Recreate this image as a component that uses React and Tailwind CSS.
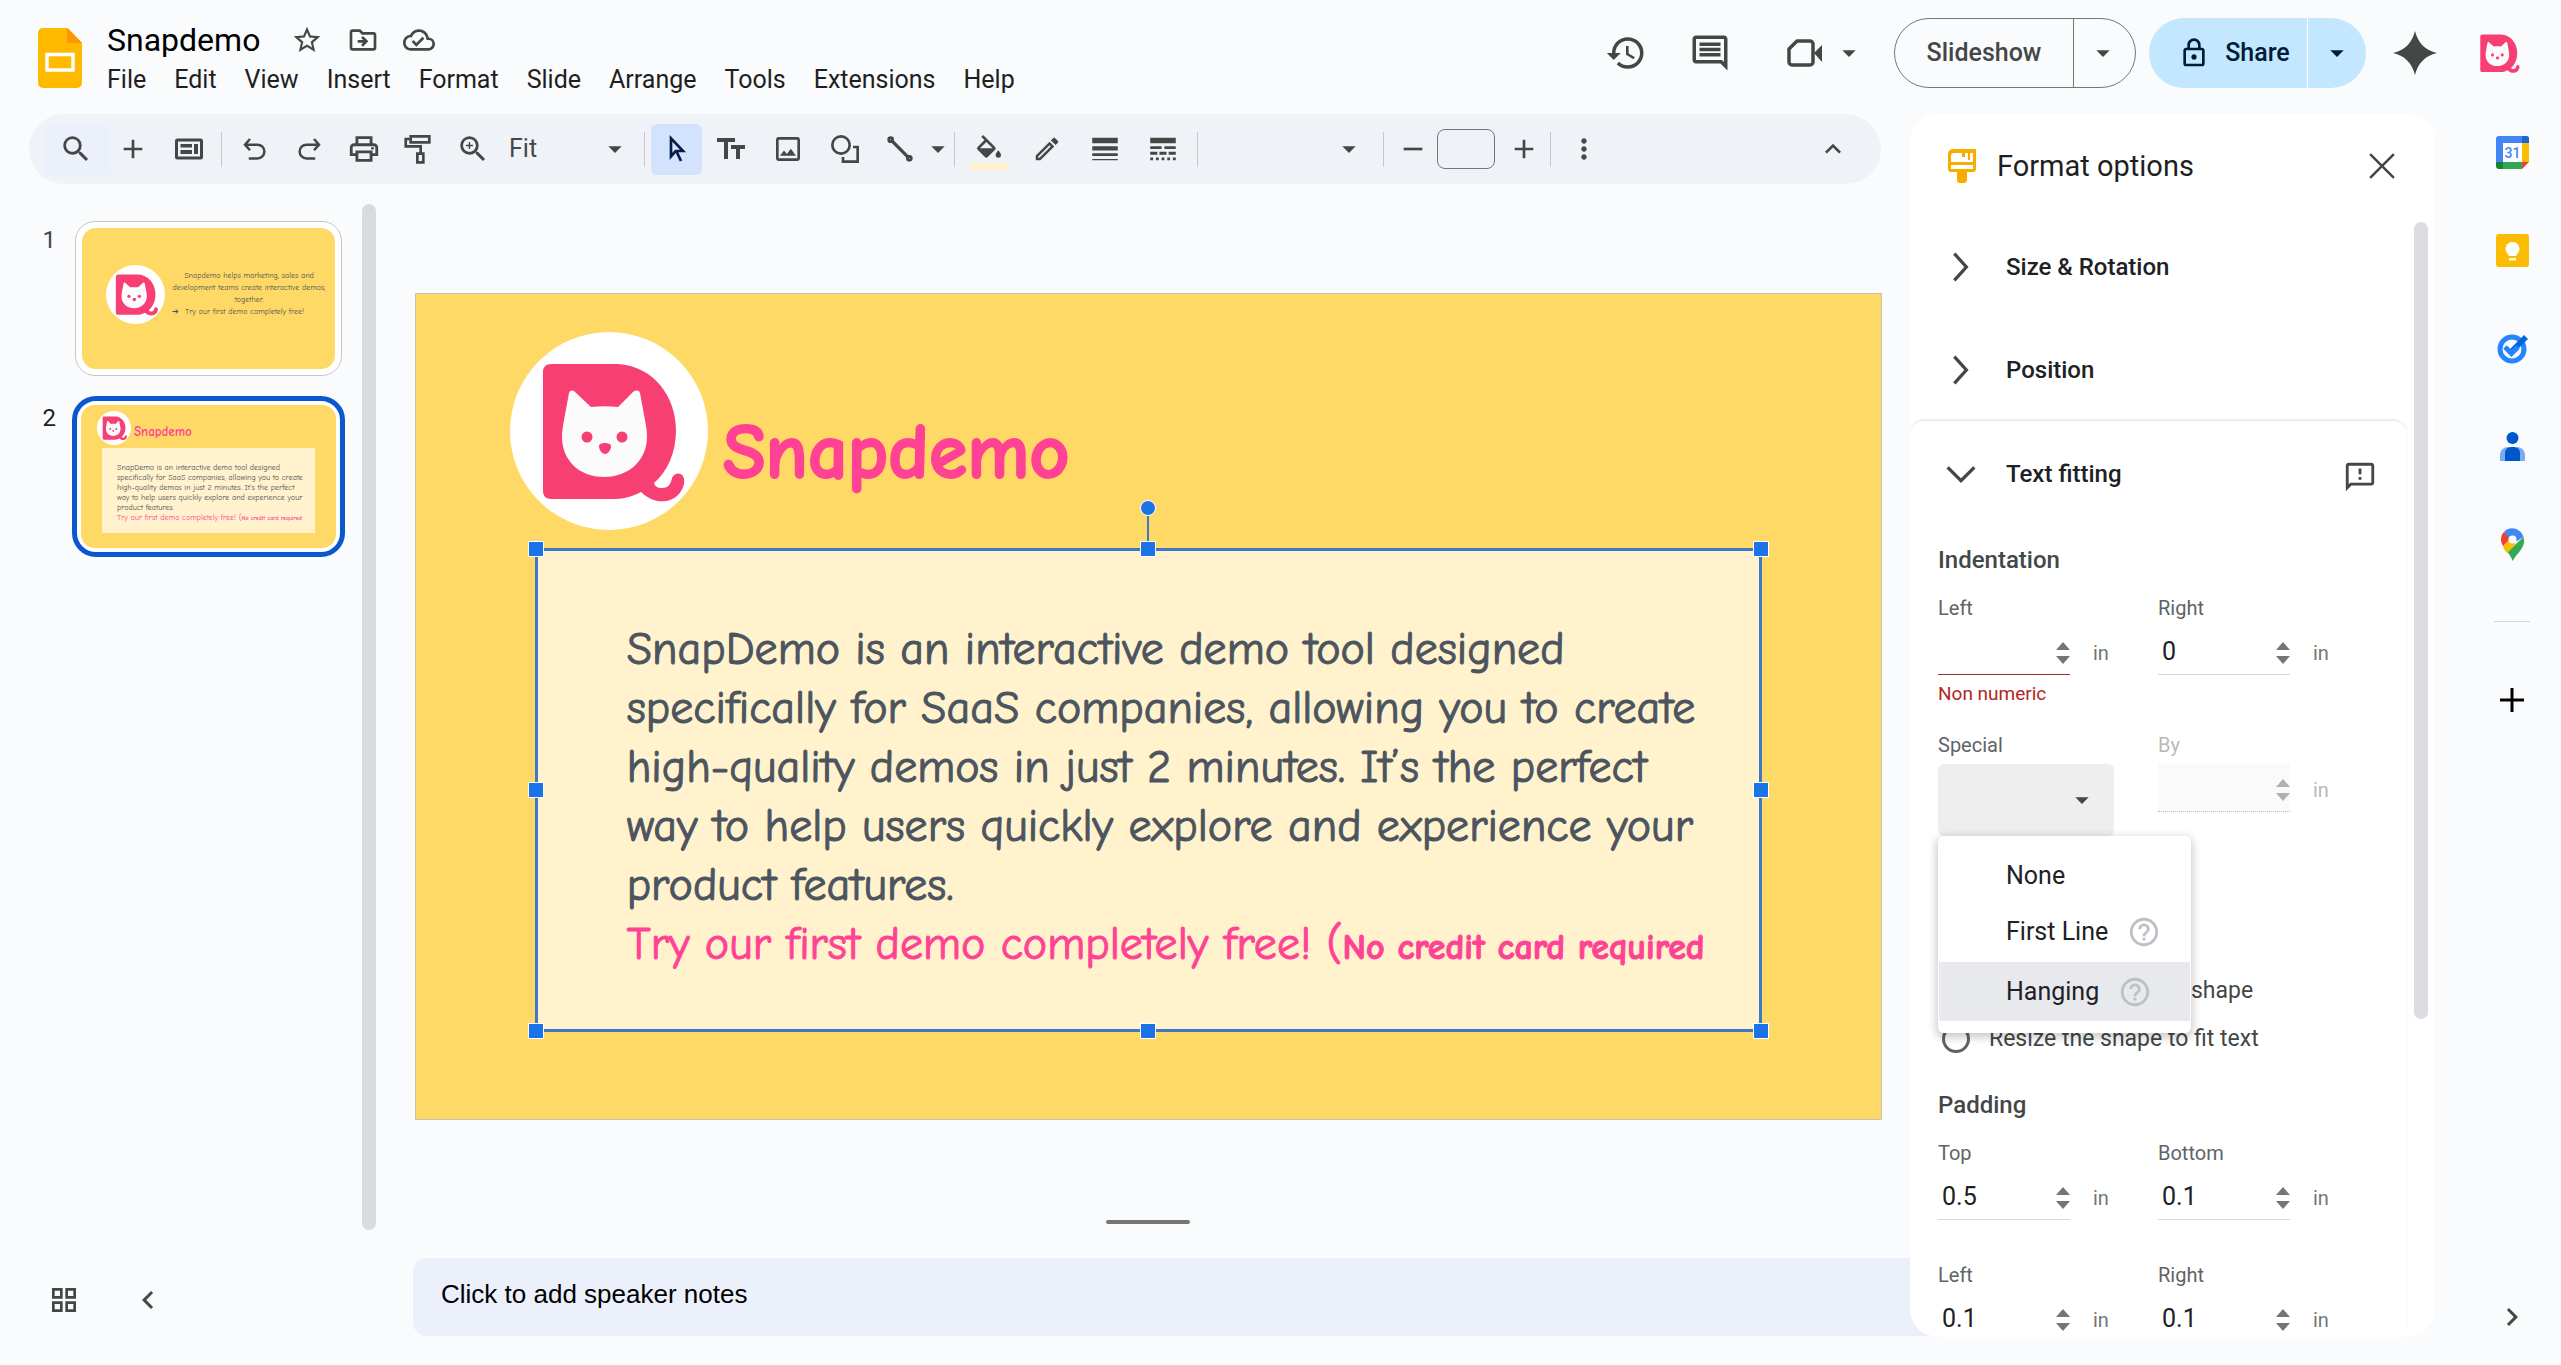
import cn from "clsx";
import {
  MdAdd, MdArrowDropDown, MdChevronLeft, MdChevronRight, MdExpandLess,
  MdHelpOutline, MdHistory, MdLineStyle, MdLineWeight, MdMoreVert,
  MdOutlineCloudDone, MdOutlineComment, MdOutlineDriveFileMove, MdOutlineEdit,
  MdOutlineFeedback, MdOutlineGridView, MdOutlineImage, MdOutlineLock, MdOutlinePrint,
  MdRemove, MdSearch, MdStarBorder, MdZoomIn,
} from "react-icons/md";

const menus = ["File", "Edit", "View", "Insert", "Format", "Slide", "Arrange", "Tools", "Extensions", "Help"];

function CatLogo({ className, viewBox = "0 0 198 198", disc = true }) {
  return (
    <svg className={className} viewBox={viewBox} aria-hidden="true">
      {disc && <circle cx="99" cy="99" r="99" fill="#fff" />}
      <path
        fill="#f83f74"
        d="M41 32h67c35 2 58 32 58 66 0 22-8 41-22 53 1 4 4 5 8 5 7 0 9-5 10-10 2-5 8-6 11-2 3 6 0 13-4 18-10 11-27 9-38-2-8 4-16 7-26 7H41c-5 0-8-3-8-8V40c0-5 3-8 8-8z"
      />
      <path
        fill="#fcfbfc"
        d="M59 61c1-3 4-3 6-1l16 15c9-1 18-1 27 0l15-15c3-2 6-2 7 1l5 27c1 6 2 11 2 17 0 23-18 40-43 40S52 128 52 105c0-6 1-11 2-17z"
      />
      <circle cx="77" cy="105" r="5.5" fill="#f83f74" />
      <circle cx="112" cy="105" r="5.5" fill="#f83f74" />
      <path fill="#f83f74" d="M89 114c0-4 12-4 12 0s-3 8-6 8-6-4-6-8z" />
    </svg>
  );
}

function StrokeIcon({ className, children }) {
  return (
    <svg className={className} viewBox="0 0 24 24" fill="none" stroke="currentColor" strokeWidth="2" aria-hidden="true">
      {children}
    </svg>
  );
}

function ToolButton({ label, className = "w-[55px]", children }) {
  return (
    <button type="button" aria-label={label} className={cn("flex h-[51px] shrink-0 items-center justify-center", className)}>
      {children}
    </button>
  );
}

function Divider() {
  return <div className="mx-[5px] h-[35px] w-px shrink-0 bg-[#c7c7c7]" />;
}

function Header() {
  return (
    <header className="flex h-[114px] shrink-0 items-start justify-between">
      <div className="flex pl-[38px]">
        <svg className="mt-7 h-[60px] w-11" viewBox="0 0 44 60" aria-hidden="true">
          <path fill="#ffba00" d="M5 0h25l14 15v40a5 5 0 0 1-5 5H5a5 5 0 0 1-5-5V5a5 5 0 0 1 5-5z" />
          <path fill="#ff9500" d="M29 0l15 15H29z" />
          <path fill="none" stroke="#fff" strokeWidth="3.5" d="M9 26.500h26v15.500H9z" />
        </svg>
        <div className="flex flex-col pl-[25px] pt-5">
          <div className="flex h-10 items-center text-[#444746]">
            <h1 className="mr-[31px] text-[32px] leading-10 text-black">Snapdemo</h1>
            <button type="button" aria-label="Star" className="mr-6"><MdStarBorder className="size-8" /></button>
            <button type="button" aria-label="Move" className="mr-6"><MdOutlineDriveFileMove className="size-8" /></button>
            <button type="button" aria-label="Saved to Drive"><MdOutlineCloudDone className="size-8" /></button>
          </div>
          <nav className="mt-1 flex gap-7 text-[25px] leading-8 text-[#1f1f1f]">
            {menus.map(menu => <button type="button" key={menu}>{menu}</button>)}
          </nav>
        </div>
      </div>

      <div className="flex h-[70px] items-center pr-[41px] pt-[36px] text-[#444746]">
        <button type="button" aria-label="Version history" className="mr-[42px]"><MdHistory className="size-[42px]" /></button>
        <button type="button" aria-label="Comments" className="mr-[54px]"><MdOutlineComment className="size-[42px]" /></button>
        <button type="button" aria-label="Join a call" className="mr-[29px] flex items-center">
          <svg className="mr-2.5 h-9 w-[38px]" viewBox="0 0 38 36" fill="none" aria-hidden="true">
            <path stroke="currentColor" strokeWidth="3.5" strokeLinejoin="round" d="M12 6h13a3 3 0 0 1 3 3v18a3 3 0 0 1-3 3H7a3 3 0 0 1-3-3V14z" />
            <path fill="currentColor" d="M29 18l8-8v17z" />
          </svg>
          <MdArrowDropDown className="size-8" />
        </button>
        <div className="mr-[13px] flex h-[70px] rounded-full border border-[#747775] text-[25px] font-medium">
          <button type="button" className="w-[178px]">Slideshow</button>
          <button type="button" aria-label="Slideshow options" className="flex w-[62px] items-center justify-center border-l border-[#747775] pr-1">
            <MdArrowDropDown className="size-8" />
          </button>
        </div>
        <div className="mr-[26px] flex h-[70px] overflow-hidden rounded-full bg-[#c2e7ff] text-[25px] font-medium text-[#001d35]">
          <button type="button" className="flex w-[158px] items-center justify-center gap-[15px] pl-3">
            <MdOutlineLock className="size-8" />
            Share
          </button>
          <button type="button" aria-label="Share options" className="flex w-[59px] items-center justify-center border-l border-white">
            <MdArrowDropDown className="size-8" />
          </button>
        </div>
        <button type="button" aria-label="Ask Gemini" className="mr-[42px]">
          <svg className="size-[46px]" viewBox="0 0 46 46" aria-hidden="true">
            <path fill="currentColor" d="M23 1c3 12 10 19 22 22-12 3-19 10-22 22-3-12-10-19-22-22C13 20 20 13 23 1z" />
          </svg>
        </button>
        <button type="button" aria-label="Account"><CatLogo className="h-[39px] w-10" viewBox="32 31 144 138" disc={false} /></button>
      </div>
    </header>
  );
}

function Toolbar() {
  return (
    <div className="ml-[29px] mr-[29px] flex h-[70px] shrink-0 items-center rounded-full bg-[#eff3f8] pl-4 pr-5 text-[#444746]">
      <ToolButton label="Search the menus" className="w-[65px] bg-[#ebf0fa] pr-1"><MdSearch className="size-[34px]" /></ToolButton>
      <ToolButton label="New slide" className="w-[45px]"><MdAdd className="size-8" /></ToolButton>
      <ToolButton label="Layout" className="ml-[7px] w-[54px]">
        <svg className="h-[26px] w-8" viewBox="0 0 32 26" aria-hidden="true">
          <rect x="3.5" y="4" width="25" height="18" rx="1" fill="none" stroke="currentColor" strokeWidth="3" />
          <path fill="currentColor" d="M7.500 8H19v3.500H7.500zM7.500 14H19v4H7.500zM21 8h4v10h-4z" />
        </svg>
      </ToolButton>
      <Divider />
      <ToolButton label="Undo"><StrokeIcon className="size-[30px]"><path d="M8 4L4 8.500l4 4.500M4.500 8.500H14a5.500 5.500 0 0 1 0 11H7" /></StrokeIcon></ToolButton>
      <ToolButton label="Redo" className="w-[54px]"><StrokeIcon className="size-[30px]"><path d="M16 4l4 4.500-4 4.500M19.500 8.500H10a5.500 5.500 0 0 0 0 11h7" /></StrokeIcon></ToolButton>
      <ToolButton label="Print"><MdOutlinePrint className="size-[34px]" /></ToolButton>
      <ToolButton label="Paint format" className="w-[54px]">
        <StrokeIcon className="size-8"><path d="M6.500 2.500h14v4.500h-14zM6.500 4.500H2.800v5.500H14v5M11.500 15.500h4.500v6.500h-4.500z" /></StrokeIcon>
      </ToolButton>
      <ToolButton label="Zoom"><MdZoomIn className="size-[34px]" /></ToolButton>
      <div className="flex w-[139px] shrink-0 items-center pl-[9px] pr-2">
        <select aria-label="Zoom level" className="min-w-0 flex-1 appearance-none text-[25px]">
          <option>Fit</option>
        </select>
        <MdArrowDropDown className="size-8" />
      </div>
      <Divider />
      <ToolButton label="Select" className="ml-px w-[51px] rounded-md bg-[#d3e3fd] text-[#041e49]">
        <StrokeIcon className="size-8"><path d="M7.500 4v13.500l3.500-4h5.500zM11.500 13.500l3.500 7.500" /></StrokeIcon>
      </ToolButton>
      <ToolButton label="Text box" className="w-[57px]">
        <svg className="size-8" viewBox="0 0 32 32" aria-hidden="true">
          <path fill="currentColor" d="M2 5h18v4h-7v17H9V9H2zM16 12h14v4h-5v10h-4V16h-5z" />
        </svg>
      </ToolButton>
      <ToolButton label="Insert image" className="w-[57px]"><MdOutlineImage className="size-8" /></ToolButton>
      <ToolButton label="Shape" className="w-[57px]">
        <StrokeIcon className="size-8"><circle cx="9" cy="9" r="6.500" /><path d="M18 10.500h3.500v11h-11V18" /></StrokeIcon>
      </ToolButton>
      <ToolButton label="Line" className="w-[54px]">
        <StrokeIcon className="size-8"><path d="M5 5l14 14" strokeWidth="2.500" /><circle cx="5" cy="5" r="1.500" /><circle cx="19" cy="19" r="1.500" /></StrokeIcon>
      </ToolButton>
      <ToolButton label="Line options" className="w-[22px]"><MdArrowDropDown className="size-8 shrink-0" /></ToolButton>
      <Divider />
      <ToolButton label="Fill color" className="w-[58px] flex-col pt-1.5">
        <svg className="mb-1 h-6 w-8" viewBox="0 0 24 18" aria-hidden="true">
          <path fill="currentColor" d="M16.560 8.940L7.620 0 6.210 1.410l2.380 2.380-5.150 5.150a1.490 1.490 0 0 0 0 2.120l5.500 5.500c.29.290.68.440 1.060.440s.77-.15 1.060-.44l5.500-5.500c.59-.58.590-1.530 0-2.120zM5.210 10L10 5.210 14.790 10zM19 11.500s-2 2.170-2 3.500a2 2 0 0 0 4 0c0-1.330-2-3.500-2-3.500z" />
        </svg>
        <span className="h-[7px] w-[39px] bg-[#fff2cc]" />
      </ToolButton>
      <ToolButton label="Border color" className="w-[58px]"><MdOutlineEdit className="size-[30px]" /></ToolButton>
      <ToolButton label="Border weight" className="w-[58px]"><MdLineWeight className="size-[34px]" /></ToolButton>
      <ToolButton label="Border dash" className="w-[58px]"><MdLineStyle className="size-[34px]" /></ToolButton>
      <Divider />
      <div className="flex w-[175px] shrink-0 items-center pr-[13px]">
        <select aria-label="Font" className="min-w-0 flex-1 appearance-none text-[25px]" />
        <MdArrowDropDown className="size-8" />
      </div>
      <Divider />
      <ToolButton label="Decrease font size" className="w-12"><MdRemove className="size-8" /></ToolButton>
      <input aria-label="Font size" className="h-10 w-[58px] shrink-0 rounded-lg border border-[#747775]" />
      <ToolButton label="Increase font size" className="w-[50px] pl-2"><MdAdd className="size-8" /></ToolButton>
      <Divider />
      <ToolButton label="More" className="w-14"><MdMoreVert className="size-8" /></ToolButton>
      <ToolButton label="Hide the menus" className="ml-auto w-14"><MdExpandLess className="size-8" /></ToolButton>
    </div>
  );
}

const comic = "font-['Comic_Sans_MS','Comic_Neue','Open_Sans',sans-serif] [font-variant-ligatures:none]";

function Filmstrip() {
  return (
    <aside className="flex w-[413px] shrink-0 flex-col">
      <div className="flex flex-1 justify-between pr-[37px] pt-5">
        <ol className="flex flex-col gap-5 pt-[17px] text-2xl">
          <li className="flex">
            <span className="w-14 pt-[3px] text-right text-[#444746]">1</span>
            <button type="button" className="ml-[19px] h-[155px] w-[267px] rounded-[20px] border border-[#c4c7c5] bg-white p-[6px]">
              <div className={cn("relative h-full overflow-hidden rounded-[14px] bg-[#ffd966] text-[#4d5156]", comic)}>
                <CatLogo className="absolute left-[24px] top-[37px] size-[59px]" />
                <p className="absolute left-[90px] top-[42px] w-[154px] text-center text-[8px] leading-3">
                  Snapdemo helps marketing, sales and<br />development teams create interactive demos,<br />together.
                </p>
                <p className="absolute left-[90px] top-[78px] flex gap-1.5 text-[8px] leading-3"><span>➔</span>Try our first demo completely free!</p>
              </div>
            </button>
          </li>
          <li className="flex">
            <span className="w-14 pt-[6px] text-right text-[#1f1f1f]">2</span>
            <button type="button" className="ml-4 h-[161px] w-[273px] rounded-[24px] border-5 border-[#0b57d0] bg-white p-1">
              <div className={cn("relative h-full overflow-hidden rounded-[14px] bg-[#ffd966] text-left text-[#4d5156]", comic)}>
                <CatLogo className="absolute left-[16px] top-[6px] size-[34px]" />
                <p className="absolute left-[53px] top-[19px] text-[13px] font-bold leading-4 text-[#ff4294]">Snapdemo</p>
                <div className="absolute left-[21px] top-[43px] h-[85px] w-[213px] whitespace-nowrap bg-[#fff2cc] pl-[15px] pt-[15px] text-[8px] leading-[10px]">
                  SnapDemo is an interactive demo tool designed<br />
                  specifically for SaaS companies, allowing you to create<br />
                  high-quality demos in just 2 minutes. It’s the perfect<br />
                  way to help users quickly explore and experience your<br />
                  product features.<br />
                  <span className="text-[#ff4294]">Try our first demo completely free! (<b className="text-[6px]">No credit card required</b></span>
                </div>
              </div>
            </button>
          </li>
        </ol>
        <div className="w-[14px] rounded-full bg-[#dadbdf]" />
      </div>
      <div className="flex h-[135px] items-center gap-[50px] pl-12 pt-1 text-[#444746]">
        <button type="button" aria-label="Grid view"><MdOutlineGridView className="size-8" /></button>
        <button type="button" aria-label="Hide filmstrip"><MdChevronLeft className="size-9" /></button>
      </div>
    </aside>
  );
}

const handles = [
  "-left-2.5 -top-2.5", "left-1/2 -ml-2 -top-2.5", "-right-2.5 -top-2.5",
  "-left-2.5 top-1/2 -mt-2", "-right-2.5 top-1/2 -mt-2",
  "-left-2.5 -bottom-2.5", "left-1/2 -ml-2 -bottom-2.5", "-right-2.5 -bottom-2.5",
];

function Canvas() {
  return (
    <main className="flex min-w-0 flex-1 flex-col">
      <div className="flex-1 pl-0.5 pr-7 pt-[109px]">
        <div className={cn("relative h-[827px] border border-[#c9c3ae] bg-[#ffd966]", comic)}>
          <CatLogo className="absolute left-[94px] top-[38px] size-[198px]" />
          <h2 className="absolute left-[307px] top-[111px] text-[78px] font-bold leading-[96px] text-[#ff4294] [-webkit-text-stroke:2px_#ff4294]">Snapdemo</h2>
          <div className="absolute left-[8.1%] top-[254px] h-[484px] w-[83.8%] whitespace-nowrap border-3 border-[#3d78c9] bg-[#fff2cc] pl-[89px] pt-[69px] text-[46px] leading-[59px] text-[#4b545f] [-webkit-text-stroke:1px]">
            SnapDemo is an interactive demo tool designed<br />
            specifically for SaaS companies, allowing you to create<br />
            high-quality demos in just 2 minutes. It’s the perfect<br />
            way to help users quickly explore and experience your<br />
            product features.<br />
            <span className="text-[#ff4294]">Try our first demo completely free! (<b className="text-[36px]">No credit card required</b></span>
            <span className="absolute -top-[37px] left-1/2 -ml-px h-9 w-0.5 bg-[#3d78c9]" />
            <span className="absolute -top-[51px] left-1/2 -ml-2 size-4 rounded-full border border-white bg-[#1a73e8]" />
            {handles.map(place => <span key={place} className={cn("absolute size-4 border border-white bg-[#1a73e8]", place)} />)}
          </div>
        </div>
      </div>
      <div className="mr-7 flex h-[38px] shrink-0 justify-center">
        <div className="h-1 w-[84px] rounded-full bg-[#757575]" />
      </div>
      <div className="mb-[29px] -mr-8 h-[78px] shrink-0 rounded-[14px] bg-[#ebf0fa] px-7 pt-5">
        <textarea
          aria-label="Speaker notes"
          rows={1}
          defaultValue="Click to add speaker notes"
          className="w-full resize-none font-['Arial','Liberation_Sans',sans-serif] text-[26px] leading-8 text-black outline-none"
        />
      </div>
    </main>
  );
}

function NumberField({ id, label, value, error, disabled }) {
  return (
    <div className="w-[220px]">
      <label htmlFor={id} className={cn("mb-[7px] block h-6 text-xl leading-6", disabled ? "text-[#b9b9b9]" : "text-[#5f6368]")}>{label}</label>
      <div className="flex items-center">
        <div
          className={cn(
            "flex h-12 w-[132px] items-center border-b pt-0.5",
            error && "border-[#a32b2b]",
            disabled && "border-dotted border-[#b9b9b9] bg-[#fafafa] text-[#b0b0b0]",
            !error && !disabled && "border-[#d5d7da]",
            !disabled && "text-[#757575]",
          )}
        >
          <input id={id} defaultValue={value} disabled={disabled} className="min-w-0 flex-1 px-1 text-[25px] leading-8 text-[#202124] outline-none" />
          <svg className="h-6 w-[14px]" viewBox="0 0 14 24" fill="currentColor" aria-hidden="true">
            <path d="M7 2l7 8H0zM0 16h14l-7 8z" />
          </svg>
        </div>
        <span className={cn("pl-[23px] pt-1 text-xl leading-6", disabled ? "text-[#b9b9b9]" : "text-[#757575]")}>in</span>
      </div>
      {error && <p className="mt-[7px] h-6 text-[19px] leading-6 text-[#b3261e]">{error}</p>}
    </div>
  );
}

function SectionHeading({ children }) {
  return <h4 className="text-2xl leading-7 font-medium text-[#444746]">{children}</h4>;
}

const options = [
  { name: "None", help: false, className: "h-14" },
  { name: "First Line", help: true, className: "h-[58px] pb-0.5" },
  { name: "Hanging", help: true, className: "h-[59px] bg-[#e8e9ec]" },
];

function FormatOptions() {
  return (
    <section className="flex w-[525px] shrink-0 flex-col overflow-hidden rounded-[28px] bg-white">
      <header className="flex h-[101px] shrink-0 items-center px-[38px] pt-[3px]">
        <svg className="mr-[21px] h-[34px] w-7" viewBox="0 0 28 34" aria-hidden="true">
          <path fill="#f9ab00" d="M5 0h23v20a3 3 0 0 1-3 3h-6v8a3 3 0 0 1-3 3h-4a3 3 0 0 1-3-3v-8H3a3 3 0 0 1-3-3V5a5 5 0 0 1 5-5z" />
          <path fill="#fff" d="M6 4h8v4h3V4h3v7h2V4h3v9H3V7a3 3 0 0 1 3-3zM3 16h22v4H3z" />
        </svg>
        <h2 className="text-[29px] leading-9 text-[#1f1f1f]">Format options</h2>
        <button type="button" aria-label="Close" className="ml-auto text-[#444746]">
          <StrokeIcon className="size-[30px]"><path d="M2.500 2.500l19 19M21.500 2.500l-19 19" /></StrokeIcon>
        </button>
      </header>
      <div className="flex min-h-0 flex-1">
        <div className="flex-1">
          {["Size & Rotation", "Position"].map(title => (
            <button type="button" key={title} className="flex h-[103px] w-full items-center pl-[35px] text-2xl font-medium text-[#202124]">
              <StrokeIcon className="mr-[29px] size-8"><path stroke="#444746" strokeWidth="2.500" d="M7 2l9 10-9 10" /></StrokeIcon>
              {title}
            </button>
          ))}
          <div className="rounded-[14px] shadow-[0_-2px_3px_-1px_rgba(0,0,0,0.14)]">
            <div className="flex h-[106px] items-center pl-[35px] pr-[30px]">
              <button type="button" className="flex items-center text-2xl font-medium text-[#202124]">
                <StrokeIcon className="mr-[29px] size-8"><path stroke="#444746" strokeWidth="2.500" d="M2 7l10 10L22 7" /></StrokeIcon>
                Text fitting
              </button>
              <button type="button" aria-label="Send feedback" className="ml-auto pt-1.5 text-[#444746]"><MdOutlineFeedback className="size-[34px]" /></button>
            </div>
            <div className="pl-7 pt-[19px]">
              <SectionHeading>Indentation</SectionHeading>
              <div className="mt-[22px] flex">
                <NumberField id="indent-left" label="Left" value="" error="Non numeric" />
                <NumberField id="indent-right" label="Right" value="0" />
              </div>
              <div className="mt-[27px] flex">
                <div className="relative w-[220px]">
                  <label htmlFor="special" className="mb-[7px] block h-6 text-xl leading-6 text-[#5f6368]">Special</label>
                  <div className="flex h-[72px] w-44 items-center rounded-md bg-[#eee] pr-4 text-[#444746]">
                    <select id="special" className="h-full min-w-0 flex-1 appearance-none outline-none" />
                    <MdArrowDropDown className="size-8" />
                  </div>
                  <ul role="listbox" aria-label="Special" className="absolute left-0 top-[103px] z-10 w-[253px] rounded-md bg-white px-px pb-3 pt-3 text-[25px] text-[#202124] shadow-[0_3px_8px_2px_rgba(0,0,0,0.2)]">
                    {options.map(option => (
                      <li key={option.name} role="option" aria-selected={option.name === "Hanging"} className={cn("flex items-center pl-[67px]", option.className)}>
                        {option.name}
                        {option.help && <MdHelpOutline className="ml-[19px] size-[34px] text-[#bdc1c6]" />}
                      </li>
                    ))}
                  </ul>
                </div>
                <NumberField id="indent-by" label="By" value="" disabled />
              </div>
              <fieldset className="mt-[131px] text-[23px] text-[#444746]">
                <label className="flex h-12 items-center pl-1">
                  <input type="radio" name="autofit" className="mr-[221px] size-7 appearance-none rounded-full border-3 border-[#5f6368]" />
                  shape
                </label>
                <label className="flex h-12 items-center pl-1">
                  <input type="radio" name="autofit" className="mr-[19px] size-7 appearance-none rounded-full border-3 border-[#5f6368]" />
                  Resize the shape to fit text
                </label>
              </fieldset>
              <div className="mt-7">
                <SectionHeading>Padding</SectionHeading>
              </div>
              <div className="mt-[22px] flex">
                <NumberField id="padding-top" label="Top" value="0.5" />
                <NumberField id="padding-bottom" label="Bottom" value="0.1" />
              </div>
              <div className="mt-[43px] flex">
                <NumberField id="padding-left" label="Left" value="0.1" />
                <NumberField id="padding-right" label="Right" value="0.1" />
              </div>
            </div>
          </div>
        </div>
        <div className="mx-[7px] mt-[7px] h-[71%] w-[14px] rounded-full bg-[#dadce0]" />
      </div>
    </section>
  );
}

const apps = [
  {
    name: "Calendar",
    icon: (
      <>
        <path fill="#4285f4" d="M3 0h27a3 3 0 0 1 3 3v4H7v19H0V3a3 3 0 0 1 3-3z" />
        <path fill="#1967d2" d="M26 0h4a3 3 0 0 1 3 3v4h-7z" />
        <path fill="#fbbc04" d="M26 7h7v19h-7z" />
        <path fill="#34a853" d="M7 26h19v7H7z" />
        <path fill="#188038" d="M0 26h7v7H3a3 3 0 0 1-3-3z" />
        <path fill="#ea4335" d="M26 26h7l-7 7z" />
        <path fill="#fff" d="M7 7h19v19H7z" />
        <text x="16.500" y="22" textAnchor="middle" fontSize="14" fontWeight="500" fill="#4285f4">31</text>
      </>
    ),
  },
  {
    name: "Keep",
    icon: (
      <>
        <rect width="33" height="33" rx="3" fill="#fbbc04" />
        <path fill="#fff" d="M16.500 8a7 7 0 0 0-4 12.700V22h8v-1.300a7 7 0 0 0-4-12.700zM13 24h7v2.500h-7z" />
      </>
    ),
  },
  {
    name: "Tasks",
    icon: (
      <>
        <circle cx="16" cy="17" r="12" fill="none" stroke="#2684fc" strokeWidth="5" />
        <path fill="none" stroke="#0066da" strokeWidth="5.500" d="M15 20L30 5" />
        <path fill="none" stroke="#2684fc" strokeWidth="5" d="M9 15l6.500 6.500L22 15" />
      </>
    ),
  },
  {
    name: "Contacts",
    icon: (
      <>
        <path fill="#7baaf7" d="M4 31V25a8 8 0 0 1 8-8h9a8 8 0 0 1 8 8v6z" />
        <path fill="#0057cc" d="M9 31V23c0-4 3-6 7.500-6s7.500 2 7.500 6v8z" />
        <circle cx="16.500" cy="8" r="6" fill="#0057cc" />
      </>
    ),
  },
  {
    name: "Maps",
    icon: (
      <>
        <path fill="#34a853" d="M27.500 9c2 6-1 11-5 16-3 3-4 5-6 8-1-4-3-6-5-9z" />
        <path fill="#fbbc04" d="M7 18l6-6 7 4-9 9c-2-2-3-4-4-7z" />
        <path fill="#ea4335" d="M5 12c0-4 1-6 3-8l7 6-8 8c-1-2-2-4-2-6z" />
        <path fill="#4285f4" d="M8 4c5-6 16-5 19.500 5L18 15l-5-5z" />
        <circle cx="16.500" cy="11.500" r="4" fill="#fff" />
      </>
    ),
  },
];

function SidePanel() {
  return (
    <aside className="flex w-[126px] shrink-0 flex-col items-center pl-7 pt-[22px]">
      <div className="flex flex-col gap-[65px]">
        {apps.map(app => (
          <button type="button" key={app.name} aria-label={app.name}>
            <svg className="size-[33px]" viewBox="0 0 33 33" aria-hidden="true">{app.icon}</svg>
          </button>
        ))}
      </div>
      <div className="mt-[60px] h-px w-9 bg-[#d5d7da]" />
      <button type="button" aria-label="Get add-ons" className="mt-[60px] text-black">
        <StrokeIcon className="size-9"><path d="M12 4v16M4 12h16" /></StrokeIcon>
      </button>
      <button type="button" aria-label="Hide side panel" className="mb-[30px] mt-auto text-[#444746]"><MdChevronRight className="size-9" /></button>
    </aside>
  );
}

export default function App() {
  return (
    <div className="flex h-screen flex-col overflow-hidden bg-[#f9fbfd] font-['Roboto','Noto_Sans',sans-serif]">
      <Header />
      <div className="flex min-h-0 flex-1">
        <div className="flex min-w-0 flex-1 flex-col">
          <Toolbar />
          <div className="flex min-h-0 flex-1">
            <Filmstrip />
            <Canvas />
          </div>
        </div>
        <div className="z-10 mb-7 flex shrink-0">
          <FormatOptions />
        </div>
        <SidePanel />
      </div>
    </div>
  );
}
